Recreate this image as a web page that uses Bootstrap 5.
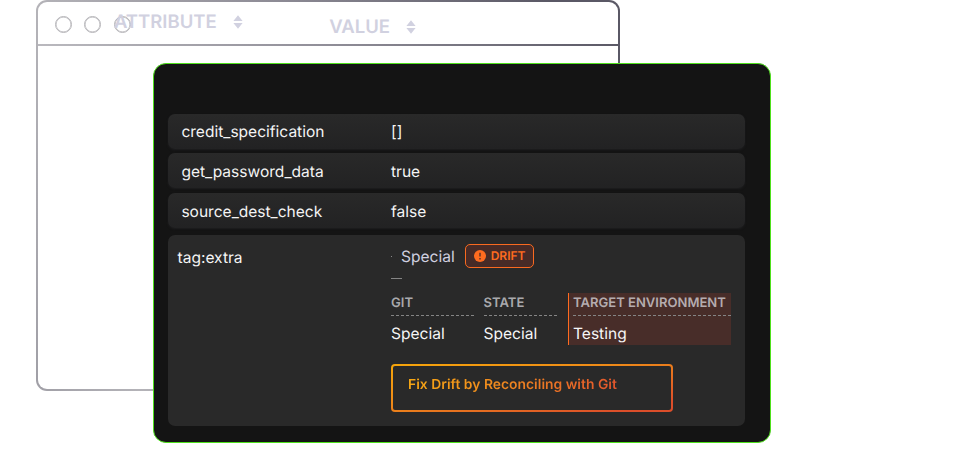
<!DOCTYPE html>
<html lang="en">
<head>
<meta charset="utf-8">
<meta name="viewport" content="width=device-width, initial-scale=1">
<title>Attribute drift</title>
<link href="https://cdn.jsdelivr.net/npm/bootstrap@5.3.0/dist/css/bootstrap.min.css" rel="stylesheet">
<style>
body { font-family: Inter, "Liberation Sans", sans-serif; background: #fff; text-rendering: geometricPrecision; }
.stage { width: 975px; height: 454px; }
/* back window */
.win { left: 36px; top: 0; width: 584px; height: 391px; border: 2px solid transparent; border-radius: 11px;
  background: linear-gradient(#fff, #fff) padding-box, linear-gradient(75deg, #a09fa6 0%, #b4b3b8 15%, #8d8b95 50%, #5a5865 90%) border-box; }
.titlebar { height: 44px; padding-left: 16.5px; background: linear-gradient(90deg, #bab9be, #908e98 50%, #5b5966) bottom / 100% 2px no-repeat; }
.dot { width: 17px; height: 17px; border: 1.5px solid #b5b4b8; box-shadow: inset 0 0 0 .5px #b5b4b8; border-radius: 50%; margin-right: 12.5px; flex: none; }
.head { color: #d1d1e0; font-weight: 600; font-size: 18.5px; line-height: 22px; white-space: nowrap; }
.head svg { margin-left: 16px; flex: none; }
.head-attr { margin-left: -29px; margin-top: -4px; }
.head-value { margin-left: 86.5px; margin-top: 6px; }
/* front panel */
.panel { left: 153px; top: 63px; width: 618px; height: 380px; padding: 49.5px 25px 0 14px; border-radius: 13px; border: 1px solid #4fe01c; background: #141414; }
.prop { height: 35.2px; margin-bottom: 4.6px; padding: 1px 0 0 13.4px; border-radius: 7px; color: #f4f4f4; font-size: 15.55px;
  background: linear-gradient(#292929, #222223); box-shadow: 0 1px 2px #1e1e20; }
.prop:first-child { padding-top: 2px; }
.prop-name { width: 209.6px; flex: none; }
.detail { margin-top: 6.5px; height: 191px; border-radius: 7px; background: #292929; color: #f6f6f6; font-size: 15.55px; padding-left: 9.5px; }
.detail-name { width: 213.5px; flex: none; padding-top: 13px; line-height: 19px; }
.current { height: 24px; margin-top: 9.5px; }
.current-value { color: #d1d1e0; margin-left: 9px; margin-right: 10.5px; padding-top: 1px; }
.speck { width: 1px; height: 1px; background: #888; }
.drift { width: 69px; height: 24px; border: 1.5px solid #f96a20; border-radius: 5px; background: #472b27; color: #ff6b1f; font-size: 12px; font-weight: 600; padding-left: 8px; gap: 4.5px; }
.dash { width: 11px; height: 1px; background: #858585; margin-top: 9.5px; }
.compare { margin-top: 14px; }
.cell { height: 52px; }
.cell-label { height: 23px; line-height: 21px; font-size: 13.05px; font-weight: 600; color: #a9a9ad; white-space: nowrap;
  background: repeating-linear-gradient(90deg, #858585 0 3px, transparent 3px 5px) bottom / 100% 1px no-repeat; }
.cell-value { line-height: 36px; }
.cell-git { width: 83px; margin-right: 9.5px; }
.cell-state { width: 75px; margin-right: 9.5px; }
.cell-target { width: 163px; border-left: 1.5px solid #ff6b1f; background: #482d29; padding-left: 4px; }
.cell-target .cell-label { color: #b5acaf; }
.fix { width: 282px; height: 48px; margin-top: 19px; padding: 0 0 4px 15px; border: 2px solid transparent; border-radius: 4px; font-size: 13.9px; font-weight: 600;
  background: linear-gradient(#292929, #292929) padding-box, linear-gradient(170deg, #f5a50a, #ee8a18 40%, #dc4e2a 90%) border-box; }
.fix span { background: linear-gradient(100deg, #f7a814, #ee8420 50%, #e2552d); -webkit-background-clip: text; background-clip: text; color: transparent; }
</style>
</head>
<body class="m-0 overflow-hidden">
<main class="stage position-relative overflow-hidden">
  <section class="win position-absolute">
    <div class="titlebar d-flex align-items-center">
      <span class="dot"></span><span class="dot"></span><span class="dot"></span>
      <div class="head head-attr d-flex align-items-center"><span>ATTRIBUTE</span>
        <svg width="10" height="14" viewBox="0 0 10 14" fill="currentColor"><path d="M5 .3 9.6 6H.4zM5 13.7.4 8h9.2z"/></svg></div>
      <div class="head head-value d-flex align-items-center"><span>VALUE</span>
        <svg width="10" height="14" viewBox="0 0 10 14" fill="currentColor"><path d="M5 .3 9.6 6H.4zM5 13.7.4 8h9.2z"/></svg></div>
    </div>
  </section>
  <section class="panel position-absolute">
    <div class="prop d-flex align-items-center"><span class="prop-name">credit_specification</span><span>[]</span></div>
    <div class="prop d-flex align-items-center"><span class="prop-name">get_password_data</span><span>true</span></div>
    <div class="prop d-flex align-items-center"><span class="prop-name">source_dest_check</span><span>false</span></div>
    <div class="detail d-flex">
      <div class="detail-name">tag:extra</div>
      <div>
        <div class="current d-flex align-items-center">
          <span class="speck"></span><span class="current-value">Special</span>
          <span class="drift d-flex align-items-center">
            <svg width="12" height="12" viewBox="0 0 12 12"><circle cx="6" cy="6" r="6" fill="#ff6b1f"/><path d="M6 2.7v3.8M6 8.1v1.3" stroke="#472b27" stroke-width="1.3"/></svg>
            <span>DRIFT</span></span>
        </div>
        <div class="dash"></div>
        <div class="compare d-flex">
          <div class="cell cell-git"><div class="cell-label">GIT</div><div class="cell-value">Special</div></div>
          <div class="cell cell-state"><div class="cell-label">STATE</div><div class="cell-value">Special</div></div>
          <div class="cell cell-target"><div class="cell-label">TARGET ENVIRONMENT</div><div class="cell-value">Testing</div></div>
        </div>
        <div class="fix d-flex align-items-center" role="button"><span>Fix Drift by Reconciling with Git</span></div>
      </div>
    </div>
  </section>
</main>
<script src="https://cdn.jsdelivr.net/npm/bootstrap@5.3.0/dist/js/bootstrap.bundle.min.js"></script>
</body>
</html>
